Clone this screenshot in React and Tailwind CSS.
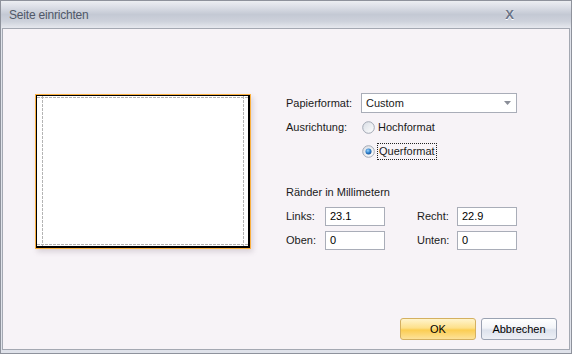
import React from "react";

function Radio({ checked }) {
  return (
    <svg width="13" height="13" viewBox="0 0 13 13">
      <defs>
        <linearGradient id={checked ? "rgc" : "rgu"} x1="0" y1="0" x2="1" y2="1">
          <stop offset="0" stopColor="#d8dce4" />
          <stop offset="1" stopColor="#ffffff" />
        </linearGradient>
        <radialGradient id="dot" cx="0.4" cy="0.35" r="0.7">
          <stop offset="0" stopColor="#9ad4ff" />
          <stop offset="0.6" stopColor="#2a7cc8" />
          <stop offset="1" stopColor="#1a4c90" />
        </radialGradient>
      </defs>
      <circle cx="6.5" cy="6.5" r="5.8" fill={`url(#${checked ? "rgc" : "rgu"})`} stroke="#a2a8b4" strokeWidth="1" />
      {checked && <circle cx="6.5" cy="6.5" r="3" fill="url(#dot)" />}
    </svg>
  );
}

function Input({ value }) {
  return (
    <div className="w-[60px] h-[19px] bg-white border border-[#a9adb8] pl-[4px] flex items-center text-[11px] text-black">
      {value}
    </div>
  );
}

export default function App() {
  return (
    <div
      className="w-[572px] h-[354px] border border-[#8e929c] bg-[#dfe2ea] flex flex-col text-[#1a1a1a]"
      style={{ fontFamily: '"Liberation Sans", Arial, sans-serif' }}
    >
      {/* Title bar */}
      <div className="h-[27px] flex items-center justify-between pl-[8px] pr-[57px] bg-[linear-gradient(to_bottom,#eceef2_0%,#dde0e8_20%,#c4c9d4_50%,#cdd1db_75%,#e6e8ee_100%)]">
        <span className="text-[12px] text-[#505868] tracking-[-0.2px]">Seite einrichten</span>
        <span className="text-[13px] font-bold text-[#6a7488] leading-none [text-shadow:0_1px_0_#ffffff]">X</span>
      </div>
      {/* Content */}
      <div className="flex-1 mx-[1px] mb-[3px] border border-[#a4a8b2] bg-[#f7f3f7] flex flex-col">
        <div className="flex flex-1">
          {/* Page preview */}
          <div className="pl-[32px] pt-[65px]">
            <div className="w-[216px] h-[155px] border border-[#fbb040] shadow-[2px_3px_5px_rgba(120,100,120,0.22)]">
              <div className="w-full h-full bg-white border-l border-t border-r-2 border-b-2 border-black">
                <svg width="211" height="150" className="block">
                  <g stroke="#b4b4b4" strokeWidth="1" strokeDasharray="3 1">
                    <line x1="5.5" y1="0" x2="5.5" y2="150" />
                    <line x1="206.5" y1="0" x2="206.5" y2="150" />
                    <line x1="0" y1="1.5" x2="211" y2="1.5" />
                    <line x1="0" y1="148.5" x2="211" y2="148.5" />
                  </g>
                </svg>
              </div>
            </div>
          </div>
          {/* Form */}
          <div className="pl-[35px] pt-[64px] flex flex-col text-[11px]">
            <div className="flex items-center h-[20px]">
              <span className="w-[75px]">Papierformat:</span>
              <div className="w-[156px] h-[20px] bg-white border border-[#a9adb8] flex items-center justify-between pl-[4px] pr-[5px]">
                <span>Custom</span>
                <svg width="7" height="4" viewBox="0 0 7 4">
                  <path d="M0 0h7L3.5 4z" fill="#8a8e98" />
                </svg>
              </div>
            </div>
            <div className="flex items-center h-[18px] mt-[5px]">
              <span className="w-[76px]">Ausrichtung:</span>
              <Radio />
              <span className="ml-[3px]">Hochformat</span>
            </div>
            <div className="flex items-center h-[18px] mt-[6px]">
              <span className="w-[76px]"></span>
              <Radio checked />
              <span className="ml-[2px] border border-dotted border-[#222] px-[1px] leading-[15px]">Querformat</span>
            </div>
            <div className="mt-[25px] h-[14px] flex items-center">Ränder in Millimetern</div>
            <div className="flex items-center mt-[8px]">
              <span className="w-[39px]">Links:</span>
              <Input value="23.1" />
              <span className="w-[72px] pl-[32px]">Recht:</span>
              <Input value="22.9" />
            </div>
            <div className="flex items-center mt-[5px]">
              <span className="w-[39px]">Oben:</span>
              <Input value="0" />
              <span className="w-[72px] pl-[32px]">Unten:</span>
              <Input value="0" />
            </div>
          </div>
        </div>
        {/* Buttons */}
        <div className="flex justify-end gap-[5px] pr-[12px] pb-[9px]">
          <button className="w-[76px] h-[22px] rounded-[3px] border border-[#d4b060] bg-[linear-gradient(to_bottom,#fff4cc_0%,#fde08a_45%,#fbcd52_55%,#fde29a_100%)] text-[11px] text-black">
            OK
          </button>
          <button className="w-[76px] h-[22px] rounded-[3px] border border-[#9aa2b2] bg-[linear-gradient(to_bottom,#ffffff_0%,#f2f4f8_45%,#dde2ec_55%,#eef0f6_100%)] text-[11px] text-black">
            Abbrechen
          </button>
        </div>
      </div>
    </div>
  );
}
